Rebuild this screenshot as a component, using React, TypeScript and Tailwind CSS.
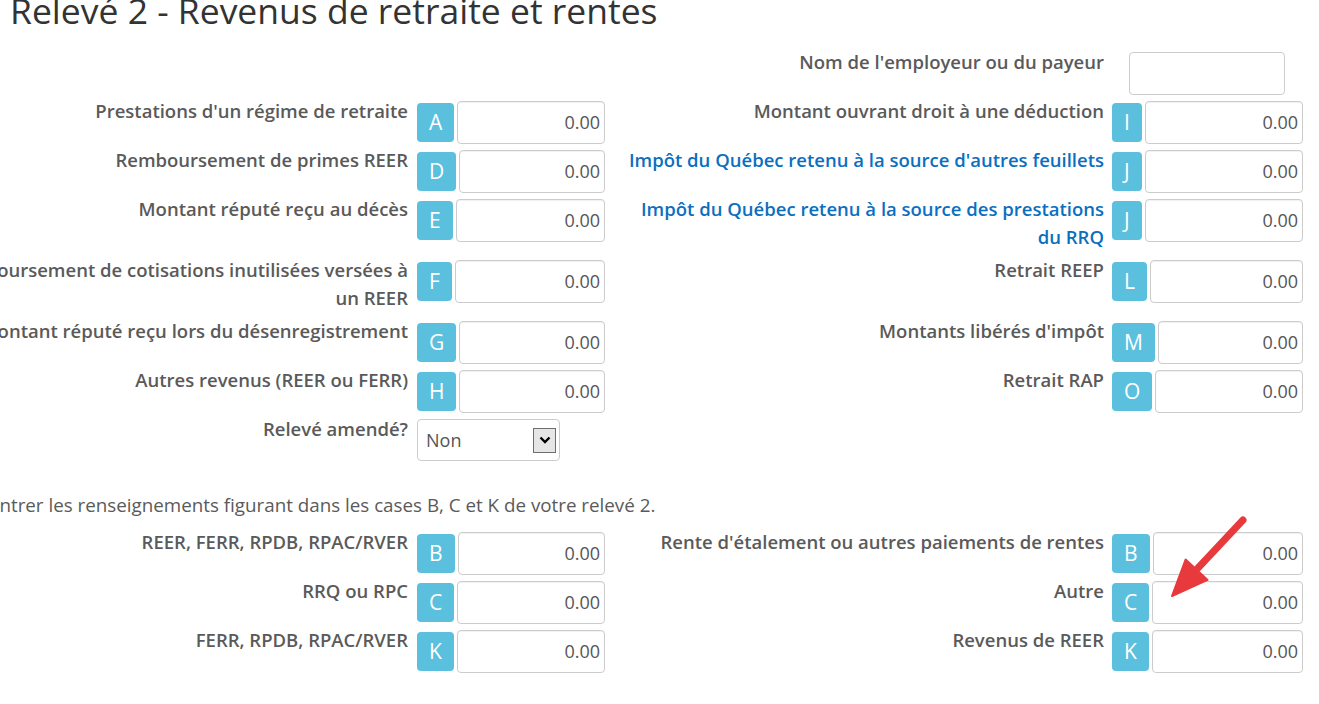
import React from "react"

type Row = {
  label?: React.ReactNode
  badge?: string
  kind?: "amount" | "text" | "select"
  blue?: boolean
}

const leftRows: Row[] = [
  {},
  { label: "Prestations d'un régime de retraite", badge: "A" },
  { label: "Remboursement de primes REER", badge: "D" },
  { label: "Montant réputé reçu au décès", badge: "E" },
  {
    label: (
      <>
        Remboursement de cotisations inutilisées versées à
        <br />
        un REER
      </>
    ),
    badge: "F",
  },
  { label: "Montant réputé reçu lors du désenregistrement", badge: "G" },
  { label: "Autres revenus (REER ou FERR)", badge: "H" },
  { label: "Relevé amendé?", kind: "select" },
]

const rightRows: Row[] = [
  { label: "Nom de l'employeur ou du payeur", kind: "text" },
  { label: "Montant ouvrant droit à une déduction", badge: "I" },
  { label: "Impôt du Québec retenu à la source d'autres feuillets", badge: "J", blue: true },
  {
    label: (
      <>
        Impôt du Québec retenu à la source des prestations
        <br />
        du RRQ
      </>
    ),
    badge: "J",
    blue: true,
  },
  { label: "Retrait REEP", badge: "L" },
  { label: "Montants libérés d'impôt", badge: "M" },
  { label: "Retrait RAP", badge: "O" },
  {},
]

const bottomLeft: Row[] = [
  { label: "REER, FERR, RPDB, RPAC/RVER", badge: "B" },
  { label: "RRQ ou RPC", badge: "C" },
  { label: "FERR, RPDB, RPAC/RVER", badge: "K" },
]

const bottomRight: Row[] = [
  { label: "Rente d'étalement ou autres paiements de rentes", badge: "B" },
  { label: "Autre", badge: "C" },
  { label: "Revenus de REER", badge: "K" },
]

function Badge({ letter }: { letter: string }) {
  return (
    <div className="h-[39px] px-[12px] rounded-[4px] bg-[#5bc0de] text-white text-[21px] flex items-center justify-center shrink-0">
      {letter}
    </div>
  )
}

function Amount() {
  return (
    <div className="flex-1 h-[43px] border border-[#cccccc] rounded-[4px] bg-white flex items-center justify-end pr-[4px] text-[18px] text-[#555555] shadow-[inset_0_1px_1px_rgba(0,0,0,0.06)]">
      0.00
    </div>
  )
}

function FieldRow({ row, side }: { row: Row; side: "left" | "right" }) {
  if (!row.label) return <div />
  const group = side === "left" ? "w-[188px]" : "w-[191px]"
  const pad = side === "left" ? "pr-[9px]" : "pr-[8px]"
  return (
    <div className="flex items-start h-full">
      <div className={`flex-1 min-w-0 flex justify-end -mt-[4px] ${pad}`}>
        <div
          className={`shrink-0 text-right whitespace-nowrap font-semibold text-[18.5px] leading-[28px] ${
            row.blue ? "text-[#0b6fbf]" : "text-[#5a5a5a]"
          }`}
        >
          {row.label}
        </div>
      </div>
      <div className={`${group} flex items-center gap-[3px] shrink-0`}>
        {row.kind === "text" && (
          <div className="ml-[17px] w-[156px] h-[43px] border border-[#cccccc] rounded-[4px] bg-white" />
        )}
        {row.kind === "select" && (
          <div className="w-[143px] h-[42px] border border-[#cccccc] rounded-[4px] bg-white flex items-center justify-between pl-[8px] pr-[3px] text-[18px] text-[#555555]">
            <span>Non</span>
            <div className="w-[23px] h-[25px] border border-[#6e6e6e] bg-[#e6e6e6] flex items-center justify-center">
              <svg width="12" height="8" viewBox="0 0 12 8">
                <path d="M1.5 1.5 L6 6 L10.5 1.5" fill="none" stroke="#000" strokeWidth="2.4" />
              </svg>
            </div>
          </div>
        )}
        {row.badge && (
          <>
            <Badge letter={row.badge} />
            <Amount />
          </>
        )}
      </div>
    </div>
  )
}

export default function App() {
  const grid: React.ReactNode[] = []
  leftRows.forEach((r, i) => {
    grid.push(<FieldRow key={`l${i}`} row={r} side="left" />)
    grid.push(<FieldRow key={`r${i}`} row={rightRows[i]} side="right" />)
  })
  const bottom: React.ReactNode[] = []
  bottomLeft.forEach((r, i) => {
    bottom.push(<FieldRow key={`bl${i}`} row={r} side="left" />)
    bottom.push(<FieldRow key={`br${i}`} row={bottomRight[i]} side="right" />)
  })

  return (
    <div className="relative w-[1319px] h-[704px] overflow-hidden bg-white font-['Open_Sans',sans-serif]">
      <h1 className="ml-[10px] -mt-[7px] text-[35.5px] leading-[34px] text-[#333333] whitespace-nowrap">
        Relevé 2 - Revenus de retraite et rentes
      </h1>

      <div className="-ml-[52px] w-[1355px]">
        <div className="mt-[25px] grid grid-cols-[657px_688px] gap-x-[10px] gap-y-[6px] grid-rows-[43px_43px_43px_55px_55px_43px_43px_43px]">
          {grid}
        </div>

        <p className="mt-[32px] pl-[41px] text-[18.8px] leading-[22px] text-[#5a5a5a] whitespace-nowrap">
          Entrer les renseignements figurant dans les cases B, C et K de votre relevé 2.
        </p>

        <div className="mt-[16px] grid grid-cols-[657px_688px] gap-x-[10px] gap-y-[6px] grid-rows-[43px_43px_43px]">
          {bottom}
        </div>
      </div>

      {/* annotation arrow */}
      <svg className="absolute left-[1160px] top-[510px]" width="95" height="95" viewBox="0 0 95 95">
        <line x1="83" y1="10" x2="38" y2="58" stroke="#e8393c" strokeWidth="7" strokeLinecap="round" />
        <polygon points="12,86 47.6,69.9 25.6,49.5" fill="#e8393c" stroke="#e8393c" strokeWidth="2" strokeLinejoin="round" />
      </svg>
    </div>
  )
}
